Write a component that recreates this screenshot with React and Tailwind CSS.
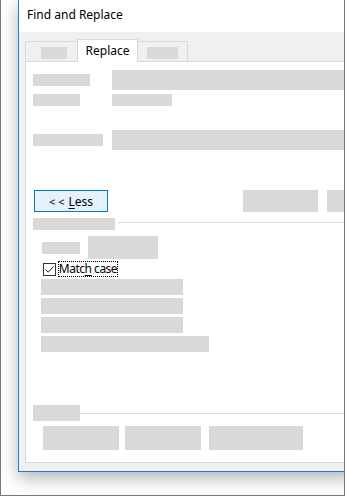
export default function App() {
  const ph = "bg-[#d9d9d9]";
  return (
    <div className="w-[345px] h-[496px] overflow-hidden bg-white border-l border-r border-b border-[#777777] font-['Noto_Sans',sans-serif] text-[12px] text-black">
      <div className="ml-[17px] w-[340px] h-[472px] border-l border-b border-[#1a7fd4] shadow-[0_6px_16px_rgba(0,0,0,0.3)] flex flex-col">
        {/* title bar */}
        <div className="h-[32px] bg-white flex items-center pl-[8px] pb-[2px] text-[12px] leading-none">
          Find and Replace
        </div>

        {/* body */}
        <div className="flex-1 bg-[#f0f0f0] pl-[6px] pt-[7px]">
          {/* tabs */}
          <div className="flex items-end h-[23px] relative z-10">
            <div className="w-[52px] h-[21px] border-t border-l border-[#d9d9d9] flex items-center justify-center pl-[4px] pt-[1px]">
              <div className={`w-[26px] h-[12px] ${ph}`} />
            </div>
            <div className="w-[61px] h-[23px] bg-white border-t border-l border-r border-[#d9d9d9] flex items-center justify-center pb-[1px] leading-none">
              Replace
            </div>
            <div className="w-[50px] h-[21px] border-t border-r border-[#d9d9d9] flex items-center justify-center pt-[1px]">
              <div className={`w-[31px] h-[12px] ${ph}`} />
            </div>
          </div>

          {/* panel */}
          <div className="-mt-[1px] h-[402px] bg-white border border-[#d9d9d9] pl-[7px] pt-[8px] flex flex-col">
            <div className="flex items-center h-[20px]">
              <div className={`w-[57px] h-[12px] ${ph}`} />
              <div className={`ml-[22px] flex-1 h-[20px] ${ph}`} />
            </div>
            <div className="flex items-center mt-[4px] h-[12px]">
              <div className={`w-[47px] h-[12px] ${ph}`} />
              <div className={`ml-[32px] w-[60px] h-[12px] ${ph}`} />
            </div>
            <div className="flex items-center mt-[24px] h-[20px]">
              <div className={`w-[70px] h-[12px] ${ph}`} />
              <div className={`ml-[9px] flex-1 h-[20px] ${ph}`} />
            </div>

            <div className="flex items-center mt-[40px] h-[22px]">
              <button className="ml-[1px] w-[74px] h-[22px] border border-[#0078d7] bg-[#e5f1fb] flex items-center justify-center leading-none text-[12px] pt-[1px]">
                <span className="text-[11px]">&lt;</span>
                <span className="ml-[3px] text-[11px]">&lt;</span>
                <span className="ml-[4px]">
                  <span className="underline underline-offset-2">L</span>ess
                </span>
              </button>
              <div className={`ml-[135px] w-[75px] h-[22px] ${ph}`} />
              <div className={`ml-[9px] flex-1 h-[22px] ${ph}`} />
            </div>

            <div className="flex items-center mt-[6px] h-[12px]">
              <div className={`w-[82px] h-[12px] ${ph}`} />
              <div className="ml-[3px] flex-1 h-px bg-[#dcdcdc] -mt-[3px]" />
            </div>

            <div className="flex items-center mt-[6px] h-[23px] pl-[9px]">
              <div className={`w-[38px] h-[12px] ${ph}`} />
              <div className={`ml-[8px] w-[70px] h-[23px] ${ph}`} />
            </div>

            <div className="flex items-center mt-[2px] h-[16px] pl-[10px]">
              <div className="w-[13px] h-[13px] border border-[#333333] bg-white flex items-center justify-center">
                <svg width="11" height="11" viewBox="0 0 11 11">
                  <path d="M1.5 5.5 L4.2 8.2 L9.5 2.5" fill="none" stroke="#222" strokeWidth="1" />
                </svg>
              </div>
              <div className="ml-[2px] w-[60px] h-[16px] border border-dotted border-black flex items-center justify-center leading-none tracking-[-0.5px] whitespace-nowrap">
                Matc<span className="underline underline-offset-2">h</span>&nbsp;case
              </div>
            </div>

            <div className="mt-[2px] pl-[8px] flex flex-col gap-[3px]">
              <div className={`w-[142px] h-[16px] ${ph}`} />
              <div className={`w-[142px] h-[16px] ${ph}`} />
              <div className={`w-[142px] h-[16px] ${ph}`} />
              <div className={`w-[168px] h-[16px] ${ph}`} />
            </div>

            <div className="flex items-center mt-[53px] h-[16px]">
              <div className={`w-[47px] h-[16px] ${ph}`} />
              <div className="flex-1 h-px bg-[#dcdcdc]" />
            </div>

            <div className="flex items-center mt-[5px] h-[24px] pl-[10px]">
              <div className={`w-[76px] h-[24px] ${ph}`} />
              <div className={`ml-[6px] w-[76px] h-[24px] ${ph}`} />
              <div className={`ml-[8px] w-[94px] h-[24px] ${ph}`} />
            </div>
          </div>
        </div>
      </div>
    </div>
  );
}
